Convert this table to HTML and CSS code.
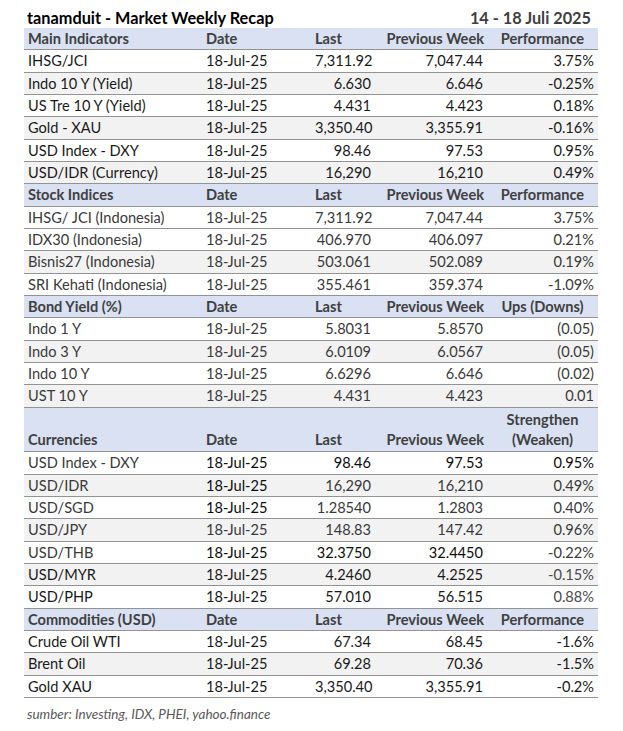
FILE: index.html
```html
<!DOCTYPE html>
<html lang="id">
<head>
<meta charset="utf-8">
<title>tanamduit - Market Weekly Recap</title>
<link rel="stylesheet" href="styles.css">
</head>
<body>
<div class="sheet">
  <div class="title-row">
    <span class="title">tanamduit - Market Weekly Recap</span>
    <span class="period">14 - 18 Juli 2025</span>
  </div>

  <div class="row head"><span>Main Indicators</span><span>Date</span><span>Last</span><span class="h-prev">Previous Week</span><span class="h-perf">Performance</span></div>
  <div class="row"><span>IHSG/JCI</span><span>18-Jul-25</span><span class="n">7,311.92</span><span class="n">7,047.44</span><span class="n">3.75%</span></div>
  <div class="row alt"><span>Indo 10 Y (Yield)</span><span>18-Jul-25</span><span class="n">6.630</span><span class="n">6.646</span><span class="n">-0.25%</span></div>
  <div class="row"><span>US Tre 10 Y (Yield)</span><span>18-Jul-25</span><span class="n">4.431</span><span class="n">4.423</span><span class="n">0.18%</span></div>
  <div class="row alt"><span>Gold - XAU</span><span>18-Jul-25</span><span class="n">3,350.40</span><span class="n">3,355.91</span><span class="n">-0.16%</span></div>
  <div class="row"><span>USD Index - DXY</span><span>18-Jul-25</span><span class="n">98.46</span><span class="n">97.53</span><span class="n">0.95%</span></div>
  <div class="row alt"><span>USD/IDR (Currency)</span><span>18-Jul-25</span><span class="n">16,290</span><span class="n">16,210</span><span class="n">0.49%</span></div>

  <div class="row head"><span>Stock Indices</span><span>Date</span><span>Last</span><span class="h-prev">Previous Week</span><span class="h-perf">Performance</span></div>
  <div class="row muted"><span>IHSG/ JCI (Indonesia)</span><span>18-Jul-25</span><span class="n">7,311.92</span><span class="n">7,047.44</span><span class="n">3.75%</span></div>
  <div class="row muted"><span>IDX30 (Indonesia)</span><span>18-Jul-25</span><span class="n">406.970</span><span class="n">406.097</span><span class="n">0.21%</span></div>
  <div class="row alt muted"><span>Bisnis27 (Indonesia)</span><span>18-Jul-25</span><span class="n">503.061</span><span class="n">502.089</span><span class="n">0.19%</span></div>
  <div class="row muted"><span>SRI Kehati (Indonesia)</span><span>18-Jul-25</span><span class="n">355.461</span><span class="n">359.374</span><span class="n">-1.09%</span></div>

  <div class="row head"><span>Bond Yield (%)</span><span>Date</span><span>Last</span><span class="h-prev">Previous Week</span><span class="h-perf">Ups (Downs)</span></div>
  <div class="row muted"><span>Indo 1 Y</span><span>18-Jul-25</span><span class="n">5.8031</span><span class="n">5.8570</span><span class="n">(0.05)</span></div>
  <div class="row alt muted"><span>Indo 3 Y</span><span>18-Jul-25</span><span class="n">6.0109</span><span class="n">6.0567</span><span class="n">(0.05)</span></div>
  <div class="row muted"><span>Indo 10 Y</span><span>18-Jul-25</span><span class="n">6.6296</span><span class="n">6.646</span><span class="n">(0.02)</span></div>
  <div class="row alt muted"><span>UST 10 Y</span><span>18-Jul-25</span><span class="n">4.431</span><span class="n">4.423</span><span class="n">0.01</span></div>

  <div class="row head tall"><span>Currencies</span><span>Date</span><span>Last</span><span class="h-prev">Previous Week</span><span class="h-perf">Strengthen<br>(Weaken)</span></div>
  <div class="row muted"><span>USD Index - DXY</span><span class="dark">18-Jul-25</span><span class="n dark">98.46</span><span class="n dark">97.53</span><span class="n dark">0.95%</span></div>
  <div class="row alt muted"><span>USD/IDR</span><span class="dark">18-Jul-25</span><span class="n">16,290</span><span class="n">16,210</span><span class="n">0.49%</span></div>
  <div class="row muted"><span>USD/SGD</span><span class="dark">18-Jul-25</span><span class="n">1.28540</span><span class="n">1.2803</span><span class="n">0.40%</span></div>
  <div class="row alt muted"><span>USD/JPY</span><span>18-Jul-25</span><span class="n">148.83</span><span class="n">147.42</span><span class="n">0.96%</span></div>
  <div class="row muted"><span>USD/THB</span><span class="dark">18-Jul-25</span><span class="n dark">32.3750</span><span class="n dark">32.4450</span><span class="n">-0.22%</span></div>
  <div class="row alt"><span>USD/MYR</span><span>18-Jul-25</span><span class="n">4.2460</span><span class="n">4.2525</span><span class="n muted-c">-0.15%</span></div>
  <div class="row"><span>USD/PHP</span><span>18-Jul-25</span><span class="n">57.010</span><span class="n">56.515</span><span class="n muted-c">0.88%</span></div>

  <div class="row head"><span>Commodities (USD)</span><span>Date</span><span>Last</span><span class="h-prev">Previous Week</span><span class="h-perf">Performance</span></div>
  <div class="row"><span>Crude Oil WTI</span><span>18-Jul-25</span><span class="n">67.34</span><span class="n">68.45</span><span class="n">-1.6%</span></div>
  <div class="row alt"><span>Brent Oil</span><span>18-Jul-25</span><span class="n">69.28</span><span class="n">70.36</span><span class="n">-1.5%</span></div>
  <div class="row"><span>Gold XAU</span><span>18-Jul-25</span><span class="n">3,350.40</span><span class="n">3,355.91</span><span class="n">-0.2%</span></div>

  <div class="source">sumber: Investing, IDX, PHEI, yahoo.finance</div>
</div>
</body>
</html>
```

FILE: styles.css
```css
html, body {
  margin: 0;
  padding: 0;
  background: #ffffff;
}

body {
  font-family: "Lato", "Open Sans", "Liberation Sans", sans-serif;
  color: #1a1a1a;
}

.sheet {
  width: 574px;
  margin-left: 24px;
}

.title-row {
  height: 28px;
  display: flex;
  justify-content: space-between;
  align-items: center;
  padding: 6px 7px 0 3px;
  box-sizing: border-box;
  font-weight: 700;
  font-size: 16.3px;
}

.title {
  color: #000000;
}

.period {
  color: #404040;
}

.row {
  display: grid;
  grid-template-columns: 178px 109px 64px 112px 111px;
  height: 22.34px;
  box-sizing: border-box;
  border-bottom: 1.7px solid #939393;
  align-items: center;
  font-size: 14.6px;
  background: #ffffff;
}

.row > span {
  padding: 0 4px;
  white-space: nowrap;
}

.row.alt {
  background: #f2f2f2;
}

.row.muted {
  color: #3a3a3a;
}

.row .dark {
  color: #0d0d0d;
}

.row .muted-c {
  color: #4a4a4a;
}

.row .n {
  text-align: right;
}

.row.head {
  background: #d9e1f2;
  font-weight: 700;
  color: #404040;
}

.row.head .h-prev {
  text-align: right;
  padding-right: 3px;
}

.row.head .h-perf {
  text-align: center;
  padding: 0;
}

.row.tall {
  height: 44.68px;
  align-items: end;
  padding-bottom: 1px;
  line-height: 20px;
}

.source {
  font-style: italic;
  font-size: 13.5px;
  color: #595959;
  padding: 8px 0 0 3px;
}
```
